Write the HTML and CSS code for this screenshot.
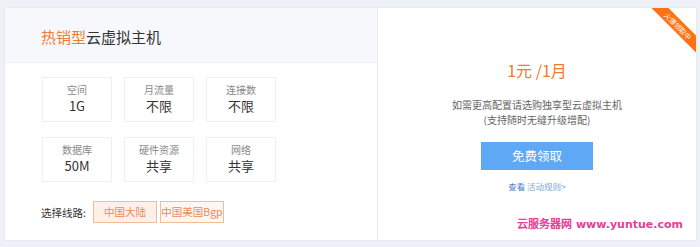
FILE: index.html
```html
<!DOCTYPE html>
<html lang="zh-CN">
<head>
  <meta charset="UTF-8">
  <meta name="viewport" content="width=device-width, initial-scale=1.0">
  <title>云虚拟主机</title>
  <link rel="stylesheet" href="styles.css">
</head>
<body>

  <div class="product-card">
    <div class="plan-info">
      <div class="plan-head">
        <h2 class="plan-title"><span class="hot">热销型</span>云虚拟主机</h2>
      </div>
      <div class="spec-list">
        <div class="spec-item">
          <p class="spec-name">空间</p>
          <p class="spec-value">1G</p>
        </div>
        <div class="spec-item">
          <p class="spec-name">月流量</p>
          <p class="spec-value">不限</p>
        </div>
        <div class="spec-item">
          <p class="spec-name">连接数</p>
          <p class="spec-value">不限</p>
        </div>
        <div class="spec-item">
          <p class="spec-name">数据库</p>
          <p class="spec-value">50M</p>
        </div>
        <div class="spec-item">
          <p class="spec-name">硬件资源</p>
          <p class="spec-value">共享</p>
        </div>
        <div class="spec-item">
          <p class="spec-name">网络</p>
          <p class="spec-value">共享</p>
        </div>
      </div>
      <div class="route-row">
        <span class="route-label">选择线路:</span>
        <span class="route-btn active">中国大陆</span>
        <span class="route-btn">中国美国Bgp</span>
      </div>
    </div>

    <div class="plan-buy">
      <div class="ribbon">火爆领取中</div>
      <p class="price">1元 /1月</p>
      <p class="buy-desc">如需更高配置请选购独享型云虚拟主机</p>
      <p class="buy-desc">(支持随时无缝升级增配)</p>
      <div class="get-btn">免费领取</div>
      <p class="rule-link"><span class="see">查看</span> 活动规则&gt;</p>
      <div class="watermark">云服务器网 www.yuntue.com</div>
    </div>
  </div>

</body>
</html>
```

FILE: styles.css
```css
*{
  margin: 0;
  padding: 0;
  box-sizing: border-box;
}

body{
  font-family: "Noto Sans CJK SC", "Noto Sans", sans-serif;
  background-color: #eef2f8;
  padding: 7px 3px 6px 4px;
  color: #333;
}

.product-card{
  display: flex;
  background-color: white;
  border: 1px solid #e6ebf2;
  overflow: hidden;
  position: relative;
}

/* left side */
.plan-info{
  width: 373px;
  border-right: 1px solid #e6ebf1;
}

.plan-head{
  height: 55px;
  background-color: #f6f8fc;
  border-bottom: 1px solid #eceff4;
  padding: 17px 0 0 36px;
}

.plan-title{
  font-size: 15px;
  font-weight: 400;
  line-height: 24px;
  color: #333;
}

.hot{
  color: #f07c2e;
}

.spec-list{
  display: grid;
  grid-template-columns: repeat(3, 70px);
  column-gap: 12px;
  row-gap: 15px;
  padding: 14px 0 0 37px;
}

.spec-item{
  height: 45px;
  border: 1px solid #eceff3;
  text-align: center;
  padding-top: 5px;
}

.spec-name{
  font-size: 10px;
  line-height: 14px;
  color: #888;
}

.spec-value{
  font-size: 13px;
  line-height: 18px;
  color: #333;
}

.route-row{
  display: flex;
  align-items: center;
  gap: 3px;
  padding: 19px 0 17px 36px;
}

.route-label{
  font-size: 10.5px;
  color: #333;
  margin-right: 4px;
}

.route-btn{
  width: 64px;
  height: 22px;
  line-height: 20px;
  text-align: center;
  white-space: nowrap;
  font-size: 10.5px;
  color: #f0885a;
  border: 1px solid #f0bd9a;
  background-color: #fdf6f1;
}

.route-btn.active{
  background-color: #fcf0e8;
}

/* right side */
.plan-buy{
  flex: 1;
  position: relative;
  display: flex;
  flex-direction: column;
  align-items: center;
  padding-top: 52px;
}

.ribbon{
  position: absolute;
  top: 12px;
  right: -22px;
  width: 80px;
  height: 12px;
  line-height: 12px;
  background-color: #ff7214;
  color: white;
  font-size: 7px;
  text-align: center;
  transform: rotate(45deg);
}

.price{
  font-size: 16px;
  line-height: 20px;
  color: #f07c2e;
  margin-bottom: 17px;
}

.buy-desc{
  font-size: 10px;
  line-height: 15px;
  color: #666;
  text-align: center;
}

.get-btn{
  margin-top: 15px;
  width: 112px;
  height: 28px;
  line-height: 28px;
  text-align: center;
  background-color: #5ea8f6;
  color: white;
  font-size: 12.5px;
}

.rule-link{
  margin-top: 10px;
  font-size: 8.5px;
  line-height: 12px;
  color: #7aa6dc;
}

.see{
  color: #4f7fc4;
}

.watermark{
  position: absolute;
  right: 13px;
  bottom: 9px;
  font-family: "DejaVu Sans", sans-serif;
  font-size: 11px;
  font-weight: 700;
  color: #e6409a;
}
```
